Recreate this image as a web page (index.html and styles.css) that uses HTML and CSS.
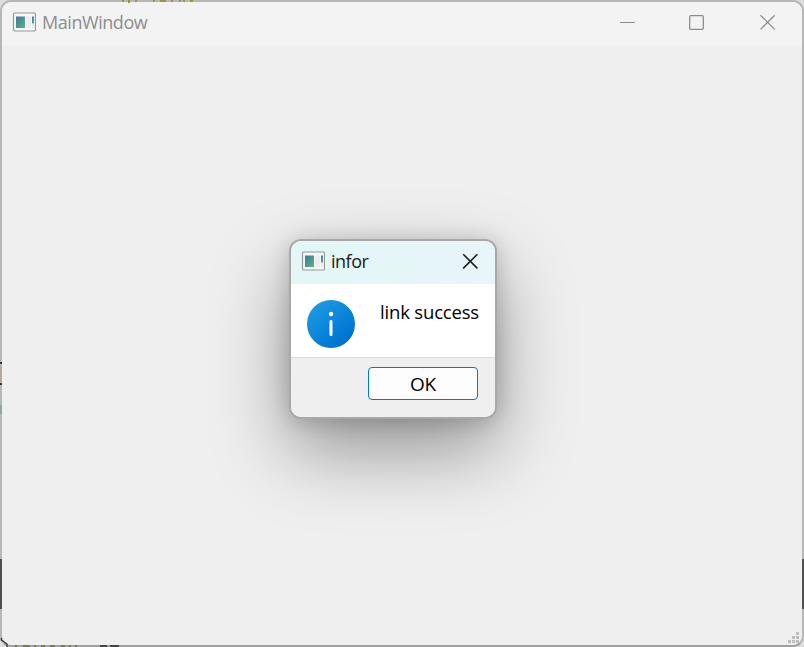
FILE: index.html
```html
<!DOCTYPE html>
<html lang="en">
<head>
<meta charset="utf-8">
<title>MainWindow</title>
<link rel="stylesheet" href="styles.css">
</head>
<body>
<svg width="0" height="0" class="defs" aria-hidden="true">
  <defs>
    <linearGradient id="pane" x1="0" y1="0" x2="1" y2="1"><stop offset="0" stop-color="#3b78a6"/><stop offset="1" stop-color="#5cb579"/></linearGradient>
    <symbol id="app" viewBox="0 0 24 20">
      <rect x="1.5" y="1" width="22" height="18" rx="1.2" fill="#f8f8f9" stroke="#92979f" stroke-width="1.2"/>
      <rect x="4" y="4.5" width="9" height="11.5" fill="url(#pane)"/>
      <rect x="14" y="4.5" width="5" height="11.5" fill="#ededf0"/>
      <rect x="20" y="4.5" width="2" height="7" fill="url(#pane)"/>
      <rect x="20" y="12" width="2" height="4" fill="#e8e8ea"/>
    </symbol>
  </defs>
</svg>
<main class="window">
  <header class="titlebar">
    <svg class="app-icon"><use href="#app"/></svg>
    <h1 class="title">MainWindow</h1>
    <div class="controls">
      <svg width="16" height="16" viewBox="0 0 16 16"><path stroke-width="1" d="M0 8.5h15"/></svg>
      <svg width="16" height="16" viewBox="0 0 16 16"><rect x=".7" y="1.7" width="13.6" height="13.6" rx="1"/></svg>
      <svg width="16" height="16" viewBox="0 0 16 16"><path d="M.5 1.2l14.2 14.2M14.7 1.2L.5 15.4"/></svg>
    </div>
  </header>
  <section class="client"></section>
  <svg class="grip" width="11" height="11" viewBox="0 0 11 11"><path d="M8 0h3v3H8zM4 4h3v3H4zM8 4h3v3H8zM0 8h3v3H0zM4 8h3v3H4zM8 8h3v3H8z"/></svg>
</main>
<svg class="backdrop" width="804" height="647" viewBox="0 0 804 647" aria-hidden="true">
  <path fill="#99963f" d="M122 0h2v2h-2zM128 0h2v3h-2zM135 0h2v2h-2zM153 0h2v2h-2zM160 0h6v2h-6zM171 0h2v2h-2zM179 0h2v2h-2zM183 0h2v2h-2zM190 0h3v2h-3z"/>
  <path fill="#505050" d="M0 559h2v50H0zM802 559h2v50h-2z"/>
  <path fill="#333" d="M0 362h2v2H0zM0 383h2v2H0z"/>
  <path fill="#b8a89c" d="M0 366h2v16H0z"/>
  <path fill="#93a4a4" d="M0 405h2v9H0z"/>
  <path fill="#444" d="M100 645h7v2h-7zM110 645h9v2h-9z"/>
  <path fill="#777b58" d="M15 645h2v2h-2zM23 645h7v2h-7zM34 645h2v2h-2zM41 645h4v2h-4zM50 645h5v2h-5zM61 645h4v2h-4zM69 645h2v2h-2zM75 645h2v2h-2z"/>
  <path fill="none" stroke="#333" stroke-width="1.3" d="M2 638q-2 2 1 3l4 3v3"/>
</svg>
<section class="dialog" role="dialog" aria-labelledby="dialog-title">
  <header class="dialog-bar">
    <svg class="app-icon"><use href="#app"/></svg>
    <h2 class="dialog-title" id="dialog-title">infor</h2>
    <svg class="dialog-close" width="16" height="16" viewBox="0 0 16 16"><path d="M1.2 1.2l14.2 14.2M15.4 1.2L1.2 15.4"/></svg>
  </header>
  <div class="dialog-body">
    <svg width="48" height="48" viewBox="0 0 48 48">
      <defs><linearGradient id="blue" x1=".15" y1=".1" x2=".85" y2=".95"><stop offset="0" stop-color="#1c9ae3"/><stop offset=".8" stop-color="#0078d4"/><stop offset="1" stop-color="#006cc4"/></linearGradient></defs>
      <circle cx="24" cy="24" r="24" fill="url(#blue)"/>
      <circle cx="24" cy="14" r="2.2" fill="#fff"/>
      <path d="M24 21.5v13" stroke="#fff" stroke-width="3" stroke-linecap="round"/>
    </svg>
    <p class="message">link success</p>
  </div>
  <footer class="dialog-footer"><button class="ok">OK</button></footer>
</section>
</body>
</html>
```
FILE: styles.css
```css
* { box-sizing: border-box; }
body {
  margin: 0;
  width: 804px;
  height: 647px;
  overflow: hidden;
  position: relative;
  background: #dedede;
  font-family: "Open Sans", "Noto Sans", sans-serif;
}
h1, h2, p { margin: 0; font-weight: 400; }
.defs, .backdrop { position: absolute; left: 0; top: 0; }
.window {
  width: 804px;
  height: 647px;
  border: 2px solid #b7b7b7;
  border-bottom-color: #a0a0a0;
  border-radius: 11px;
  overflow: hidden;
  display: flex;
  flex-direction: column;
  position: relative;
}
.titlebar {
  height: 43px;
  flex: none;
  display: flex;
  align-items: center;
  padding: 0 26px 4px 10px;
  background: #f3f3f3;
}
.app-icon { width: 24px; height: 20px; flex: none; }
.title {
  margin-left: 6px;
  font-size: 18px;
  line-height: 24px;
  letter-spacing: -.45px;
  color: #8d8d8d;
  white-space: nowrap;
}
.controls {
  margin-left: auto;
  display: flex;
  gap: 54px;
  fill: none;
  stroke: #8c8c8c;
  stroke-width: 1.3;
}
.controls svg:nth-child(2) { margin: 0 1px 0 -1px; }
.client { flex: 1; background: #efefef; }
.grip { position: absolute; right: 3px; bottom: 2px; fill: #bdbdbd; }
.dialog {
  position: absolute;
  left: 289px;
  top: 239px;
  width: 208px;
  height: 180px;
  border: 2px solid #a8a8a8;
  border-radius: 12px;
  background: #fff;
  background-clip: padding-box;
  display: flex;
  flex-direction: column;
  box-shadow: 0 32px 76px rgba(0, 0, 0, .38), 0 2px 21px rgba(0, 0, 0, .18);
}
.dialog-bar {
  height: 43px;
  flex: none;
  display: flex;
  align-items: center;
  padding: 0 17px 4px 10px;
  border-radius: 10px 10px 0 0;
  background: linear-gradient(100deg, #e2f7f6, #e8f5f9);
}
.dialog-title {
  margin-left: 6px;
  font-size: 18px;
  line-height: 24px;
  letter-spacing: -.5px;
  color: #1b1b1b;
}
.dialog-close { margin-left: auto; fill: none; stroke: #1a1a1a; stroke-width: 1.5; }
.dialog-body {
  height: 74px;
  flex: none;
  display: flex;
  justify-content: space-between;
  align-items: flex-start;
  padding: 16px 16px 0;
  border-bottom: 1px solid #dcdcdc;
}
.message {
  font-size: 18.5px;
  line-height: 24px;
  letter-spacing: -.18px;
  color: #000;
  white-space: nowrap;
}
.dialog-footer {
  flex: 1;
  display: flex;
  justify-content: flex-end;
  align-items: flex-start;
  padding: 9px 17px 0 0;
  border-radius: 0 0 10px 10px;
  background: #efefef;
}
.ok {
  width: 110px;
  height: 33px;
  padding: 1px 0 0;
  border: 1px solid #0078d4;
  border-radius: 4px;
  background: #fdfdfd;
  color: #000;
  font: 19px/30px "Open Sans", "Noto Sans", sans-serif;
  letter-spacing: -.3px;
}
```
